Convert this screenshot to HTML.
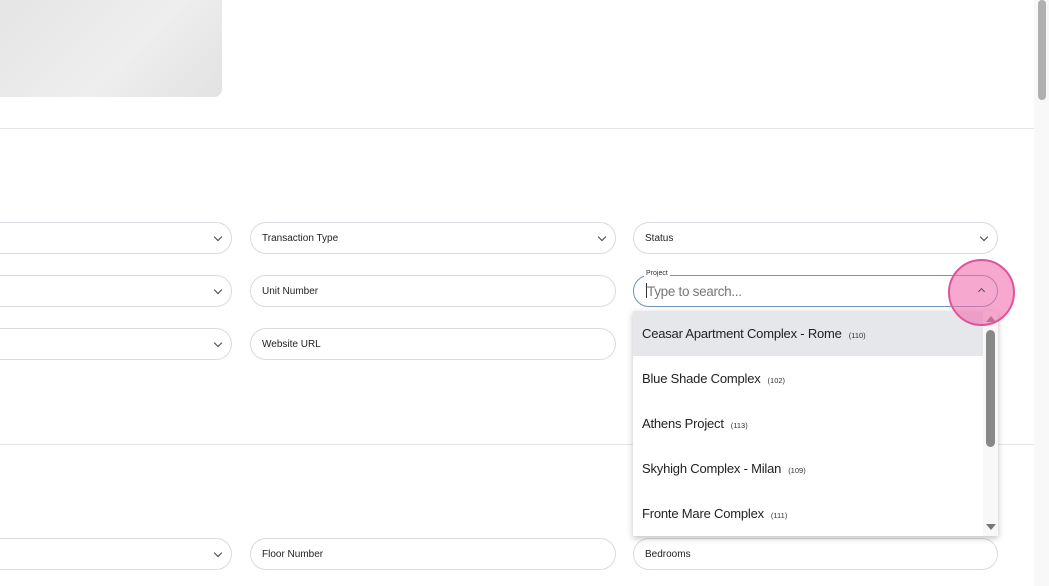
<!DOCTYPE html>
<html><head><style>
body{margin:0;width:1049px;height:586px;overflow:hidden;background:#fff;font-family:"Liberation Sans",Arial,sans-serif;position:relative}
.a{position:absolute}
.f{position:absolute;height:32px;border:1px solid #d9dbe0;border-radius:16px;background:#fff;box-sizing:border-box;font-size:10px;color:#222;padding-left:11px;line-height:32px}
.ch{position:absolute;right:10px;top:11px;width:5px;height:5px;border-right:1.5px solid #444;border-bottom:1.5px solid #444;transform:rotate(45deg)}
.it{position:absolute;left:0;width:350px;height:45px;line-height:45px;padding-left:9px;font-size:13px;color:#222;box-sizing:border-box;letter-spacing:-0.2px}
.it small{font-size:7.5px;margin-left:7px;color:#333;letter-spacing:0}
</style></head><body>
<div class="a" style="left:-10px;top:-10px;width:232px;height:107px;border-radius:8px;background:linear-gradient(135deg,#e4e4e4,#eeeeee 60%,#e2e2e2)"></div>
<div class="a" style="left:0;top:128px;width:1034px;height:1px;background:#e2e4e8"></div>
<div class="a" style="left:0;top:444px;width:1034px;height:1px;background:#e2e4e8"></div>

<div class="f" style="left:-20px;top:222px;width:252px"><span class="ch"></span></div>
<div class="f" style="left:250px;top:222px;width:366px">Transaction Type<span class="ch"></span></div>
<div class="f" style="left:633px;top:222px;width:365px">Status<span class="ch"></span></div>

<div class="f" style="left:-20px;top:275px;width:252px"><span class="ch"></span></div>
<div class="f" style="left:250px;top:275px;width:366px">Unit Number</div>
<div class="f" style="left:633px;top:275px;width:365px;border-color:#6f93b6;font-size:13.5px;color:#777;padding-left:13px;letter-spacing:-0.3px">Type to search...</div>
<div class="a" style="left:644px;top:270px;background:#fff;font-size:7px;color:#333;padding:0 2px">Project</div>
<div class="a" style="left:646px;top:283px;width:1px;height:15px;background:#333"></div>

<div class="f" style="left:-20px;top:328px;width:252px"><span class="ch"></span></div>
<div class="f" style="left:250px;top:328px;width:366px">Website URL</div>

<div class="f" style="left:-20px;top:538px;width:252px"><span class="ch"></span></div>
<div class="f" style="left:250px;top:538px;width:366px">Floor Number</div>
<div class="f" style="left:633px;top:538px;width:365px">Bedrooms</div>

<div class="a" style="left:633px;top:311px;width:365px;height:225px;background:#fff;box-shadow:0 2px 6px rgba(0,0,0,.25);overflow:hidden">
<div class="it" style="top:0;background:#e6e7ea">Ceasar Apartment Complex - Rome<small>(110)</small></div>
<div class="it" style="top:45px">Blue Shade Complex<small>(102)</small></div>
<div class="it" style="top:90px">Athens Project<small>(113)</small></div>
<div class="it" style="top:135px">Skyhigh Complex - Milan<small>(109)</small></div>
<div class="it" style="top:180px">Fronte Mare Complex<small>(111)</small></div>
<div class="a" style="left:350px;top:0;width:15px;height:225px;background:#f8f8f8"></div>
<div class="a" style="left:353px;top:19px;width:9px;height:117px;border-radius:5px;background:#888"></div>
<div class="a" style="left:353px;top:213px;width:0;height:0;border-left:5px solid transparent;border-right:5px solid transparent;border-top:6px solid #777"></div>
</div>

<div class="a" style="left:948px;top:259px;width:63px;height:63px;border-radius:50%;background:rgba(240,110,175,.6);border:2px solid #e0559a"></div>
<div class="a" style="left:979px;top:289px;width:4px;height:4px;border-left:1.3px solid #555;border-top:1.3px solid #555;transform:rotate(45deg)"></div>
<div class="a" style="left:986px;top:316px;width:0;height:0;border-left:5px solid transparent;border-right:5px solid transparent;border-bottom:6px solid #c07090"></div>

<div class="a" style="left:1034px;top:0;width:15px;height:586px;background:#f8f8f8"></div>
<div class="a" style="left:1038px;top:0;width:8px;height:100px;border-radius:4px;background:#b0b0b0"></div>
</body></html>
